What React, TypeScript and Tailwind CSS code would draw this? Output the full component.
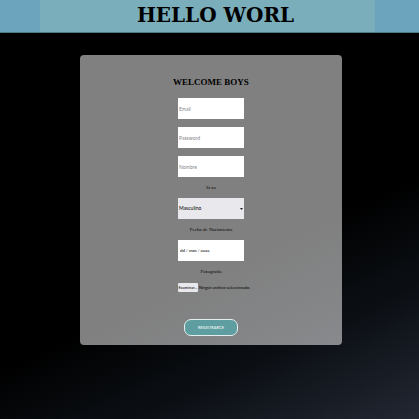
import React from "react";

const fieldClass =
  "block h-[21px] w-full bg-white px-px font-['Lato','Liberation_Sans',sans-serif] text-[5px] text-black placeholder:text-[#85858b] outline-none";
const labelClass = "flex h-[21px] w-full items-center justify-center text-[5px]";

export default function App() {
  return (
    <div className="min-h-screen bg-linear-[155deg,#000_0%,#000_60%,#0b0f14_78%,#222732_100%] font-['Liberation_Serif',serif] text-black">
      <header className="h-[33px] border-b border-[#4d7b83] bg-[#6ca4bd] pr-11 pl-10">
        <div className="flex h-8 items-center justify-center bg-[#7aaeba] pl-4">
          <h1 className="pb-0.5 font-['DejaVu_Serif',serif] text-[20px] leading-7 font-bold whitespace-nowrap">
            HELLO WORL
          </h1>
        </div>
      </header>

      <main className="pt-[22px] pr-[77px] pb-6 pl-20">
        <form
          className="flex flex-col items-center rounded-[4px] bg-white/50 pt-[17px] pb-[9px]"
          onSubmit={(e) => e.preventDefault()}
        >
          <h2 className="mb-[6px] text-[9px] leading-5 font-bold whitespace-nowrap">WELCOME BOYS</h2>

          <div className="flex w-[66px] flex-col gap-2">
            <input className={fieldClass} type="email" placeholder="Email" aria-label="Email" />
            <input className={fieldClass} type="password" placeholder="Password" aria-label="Password" />
            <input className={fieldClass} type="text" placeholder="Nombre" aria-label="Nombre" />
          </div>

          <div className="w-[66px] whitespace-nowrap">
            <label className={labelClass} htmlFor="sexo">Sexo</label>
            <div className="relative">
              <select
                id="sexo"
                className="block h-[21px] w-full appearance-none bg-[#e9e9ed] px-px font-['Lato','Liberation_Sans',sans-serif] text-[5px] text-black"
              >
                <option>Masculino</option>
                <option>Femenino</option>
              </select>
              <svg className="pointer-events-none absolute top-[10px] right-px h-[2px] w-[3px]" viewBox="0 0 3 2">
                <path d="M0 0h3L1.500 2z" fill="#222" />
              </svg>
            </div>

            <label className={labelClass} htmlFor="fecha">Fecha de Nacimiento</label>
            <input
              id="fecha"
              className="block h-[21px] w-full bg-white px-0.5 font-['Liberation_Serif',serif] text-[5px] text-black outline-none placeholder:text-black"
              type="text"
              placeholder="dd / mm / aaaa"
            />

            <span className={labelClass}>Fotografía</span>
            <label className="flex h-[11px] items-center gap-px font-['Lato','Liberation_Sans',sans-serif] text-[4px] leading-[8px]">
              <input className="sr-only" type="file" aria-label="Fotografía" />
              <span className="flex h-[9px] w-5 shrink-0 items-center justify-center rounded-[1px] bg-[#e9e9ed]">
                Examinar...
              </span>
              <span>Ningún archivo seleccionado.</span>
            </label>
          </div>

          <button
            type="submit"
            className="mt-[26px] h-[17px] w-[54px] rounded-[7px] border border-[#e4eeee] bg-[#5f9ea0] font-['Lato','Liberation_Sans',sans-serif] text-[4px] leading-[8px] text-white"
          >
            REGISTRARCE
          </button>
        </form>
      </main>
    </div>
  );
}
